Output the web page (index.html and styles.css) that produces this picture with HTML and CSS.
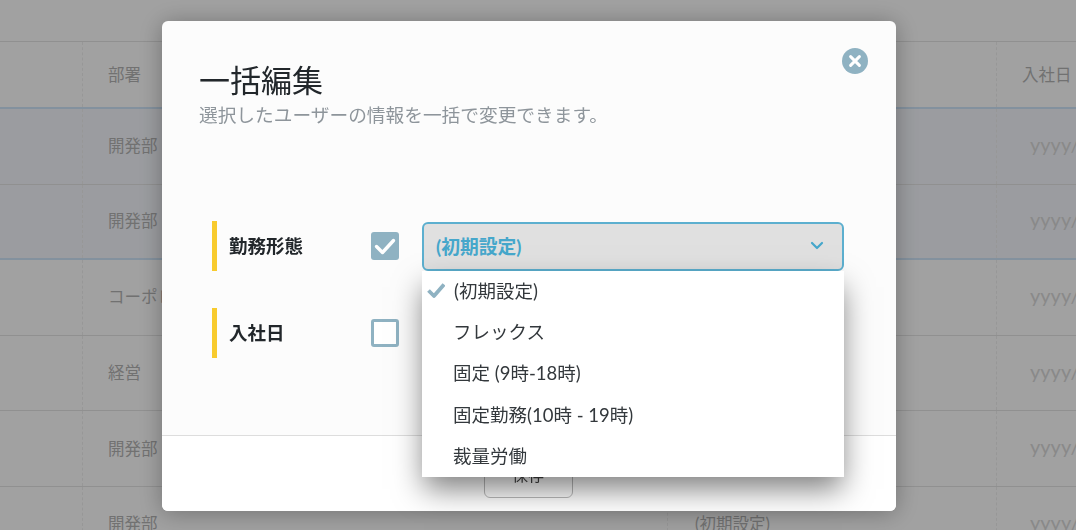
FILE: index.html
```html
<!DOCTYPE html>
<html lang="ja">
<head>
<meta charset="utf-8">
<title>一括編集</title>
<link rel="stylesheet" href="styles.css">
</head>
<body>
<div class="page">
  <div class="topbar"></div>
  <div class="row head blue-bottom">
    <div class="cell"></div><div class="cell">部署</div><div class="cell"></div><div class="cell">入社日</div>
  </div>
  <div class="row sel">
    <div class="cell"></div><div class="cell">開発部</div><div class="cell"></div><div class="cell ph">yyyy/mm/dd</div>
  </div>
  <div class="row sel blue-bottom">
    <div class="cell"></div><div class="cell">開発部</div><div class="cell"></div><div class="cell ph">yyyy/mm/dd</div>
  </div>
  <div class="row">
    <div class="cell"></div><div class="cell">コーポレート</div><div class="cell"></div><div class="cell ph">yyyy/mm/dd</div>
  </div>
  <div class="row">
    <div class="cell"></div><div class="cell">経営</div><div class="cell"></div><div class="cell ph">yyyy/mm/dd</div>
  </div>
  <div class="row">
    <div class="cell"></div><div class="cell">開発部</div><div class="cell"></div><div class="cell ph">yyyy/mm/dd</div>
  </div>
  <div class="row">
    <div class="cell"></div><div class="cell">開発部</div><div class="cell">(初期設定)</div><div class="cell ph">yyyy/mm/dd</div>
  </div>
</div>

<div class="overlay"></div>

<section class="modal">
  <button class="close" aria-label="閉じる">
    <svg width="26" height="26" viewBox="0 0 26 26"><circle cx="13" cy="13" r="13" fill="#8fb2c2"/><path d="M8.600 8.600l8.800 8.800M17.400 8.600l-8.800 8.800" stroke="#fff" stroke-width="3" stroke-linecap="round" fill="none"/></svg>
  </button>
  <header class="modal-head">
    <h1 class="title">一括編集</h1>
    <p class="sub">選択したユーザーの情報を一括で変更できます。</p>
  </header>
  <div class="modal-body">
    <div class="field">
      <div class="label">勤務形態</div>
      <span class="check on">
        <svg width="28" height="28" viewBox="0 0 28 28"><path d="M5.500 14.500l6 6L22.500 8.500" stroke="#fff" stroke-width="3.400" fill="none" stroke-linecap="round" stroke-linejoin="round"/></svg>
      </span>
      <div class="select">
        <span>(初期設定)</span>
        <svg width="14" height="9" viewBox="0 0 14 9"><path d="M2 2l5 5 5-5" stroke="#46a7cb" stroke-width="2.200" fill="none" stroke-linecap="round" stroke-linejoin="round"/></svg>
        <ul class="menu">
          <li class="item current"><svg class="tick" width="18" height="16" viewBox="0 0 18 16"><path d="M1.500 8.500l5.500 5.500L17 2.500" stroke="#8fb2c2" stroke-width="3.800" fill="none" stroke-linejoin="round"/></svg>(初期設定)</li>
          <li class="item">フレックス</li>
          <li class="item">固定 (9時-18時)</li>
          <li class="item">固定勤務(10時 - 19時)</li>
          <li class="item">裁量労働</li>
        </ul>
      </div>
    </div>
    <div class="field">
      <div class="label">入社日</div>
      <span class="check"></span>
      <div class="date"></div>
    </div>
  </div>
  <footer class="modal-foot">
    <button class="save">保存</button>
  </footer>
</section>
</body>
</html>
```

FILE: styles.css
```css
* { box-sizing: border-box; }
html, body { margin: 0; height: 100%; overflow: hidden; }
body {
  background: #fff;
  font-family: Lato, "Noto Sans CJK JP", sans-serif;
  font-size: 16.500px;
  color: #22272b;
}
.page { width: 1076px; height: 530px; overflow: hidden; }
.topbar { height: 42px; border-bottom: 1px solid #e5e5e5; }
.row {
  display: grid;
  grid-template-columns: 83px 585px 329px 79px;
  height: 75.600px;
  border-bottom: 1px solid #e5e5e5;
  color: #b4b4b4;
}
.row.head { height: 67px; }
.row.sel { background: #f6f8fd; }
.row.blue-bottom { border-bottom: 2px solid #d0e6fa; }
.cell {
  display: flex;
  align-items: center;
  padding: 0 0 2px 25px;
  border-right: 1px dashed #f0f0f0;
  white-space: nowrap;
  overflow: hidden;
}
.cell:nth-child(3) { padding-left: 27px; }
.cell:last-child { border-right: 0; padding-left: 25px; }
.cell.ph { color: #dadada; font-size: 20px; padding: 0 0 5px 33px; }
.overlay { position: fixed; inset: 0; background: rgba(0, 0, 0, 0.37); }

.modal {
  position: fixed;
  left: 162px;
  top: 21px;
  width: 734px;
  height: 490px;
  background: #fcfcfc;
  border-radius: 6px;
  box-shadow: 0 2px 24px rgba(0, 0, 0, 0.3);
  display: flex;
  flex-direction: column;
}
.close {
  position: absolute;
  top: 27px;
  right: 28px;
  width: 26px;
  height: 26px;
  padding: 0;
  border: 0;
  background: none;
  display: flex;
}
.modal-head { padding: 38px 37px 0; height: 200px; }
.title { margin: 0; font-size: 31px; font-weight: 400; line-height: 42px; color: #22272b; }
.sub { margin: 0; font-size: 18.700px; line-height: 28px; color: #8e959b; }
.modal-body {
  flex: 1;
  padding: 0 52px 0 50px;
  display: flex;
  flex-direction: column;
  gap: 37px;
}
.field { display: flex; align-items: center; height: 50px; }
.label {
  width: 159px;
  height: 50px;
  display: flex;
  align-items: center;
  padding: 0 0 2px 12px;
  border-left: 5px solid #f8cb2e;
  font-size: 18.500px;
  font-weight: 700;
}
.check {
  width: 28px;
  height: 28px;
  border: 3px solid #8fb2c2;
  border-radius: 3px;
  margin-right: 23px;
  background: #fff;
  flex: none;
}
.check.on { border: 0; background: #8fb2c2; display: flex; }
.select {
  position: relative;
  flex: 1;
  height: 49px;
  background: #e0e0e0;
  border: 2px solid #5cafcf;
  border-radius: 6px;
  padding: 0 18px 2px 12px;
  display: flex;
  align-items: center;
  justify-content: space-between;
  color: #46a7cb;
  font-size: 18.800px;
  font-weight: 700;
}
.menu {
  position: absolute;
  z-index: 2;
  left: -2px;
  right: -2px;
  top: 47px;
  height: 206px;
  margin: 0;
  padding: 0;
  list-style: none;
  background: #fff;
  box-shadow: 0 14px 28px -2px rgba(0, 0, 0, 0.5);
  color: #33383c;
  font-size: 18.500px;
  font-weight: 400;
}
.item {
  position: relative;
  height: 41.300px;
  padding: 0 0 3px 31px;
  display: flex;
  align-items: center;
  white-space: nowrap;
}
.item.current { padding-left: 32px; }
.tick { position: absolute; left: 5px; top: 11px; }
.date { flex: 1; height: 49px; border: 1px solid #ccc; border-radius: 6px; background: #fff; }
.modal-foot {
  height: 76px;
  background: #fff;
  border-top: 1px solid #ddd;
  border-radius: 0 0 6px 6px;
  display: flex;
  justify-content: center;
  padding: 18px 2px 0 0;
}
.save {
  width: 89px;
  height: 44px;
  background: #fff;
  border: 1px solid #bbb;
  border-radius: 6px;
  padding: 0 0 4px;
  font: inherit;
  font-size: 16px;
  color: #444;
}
```
